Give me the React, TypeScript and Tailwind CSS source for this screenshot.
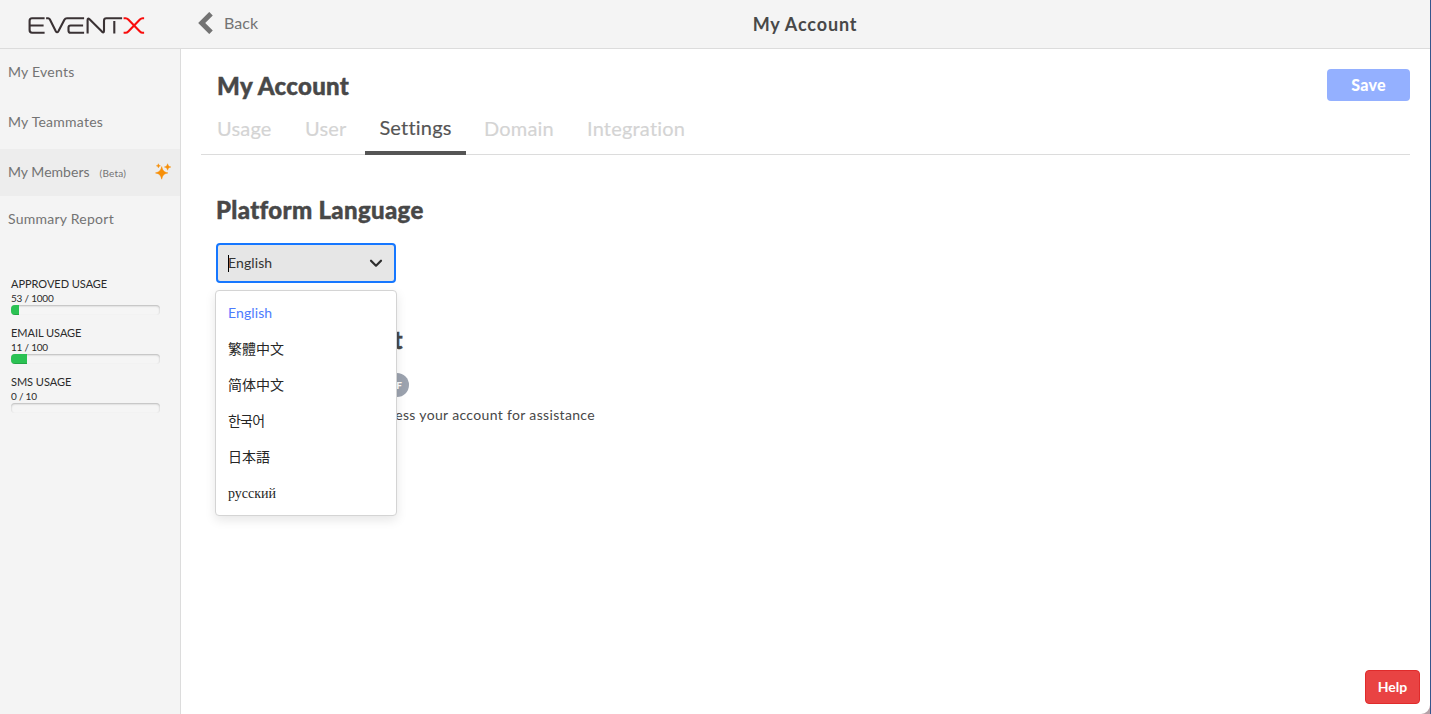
import { useState } from "react";

function Logo() {
  return (
    <svg className="ml-[28px] mt-[16px]" width="118" height="20" viewBox="28.4 16 118 20" fill="none" stroke="#3a3234" strokeWidth="2.1">
      <path d="M45 18.3H32.5Q30 18.3 30 20.8V30Q30 32.7 32.5 32.7H45M31 25.5H44" />
      <path d="M46.5 18.3H48.5Q49.6 18.3 50.2 19.3L56.2 31.2Q57.5 33.4 58.8 31.2L64.8 19.8Q65.6 18.3 67.4 18.3H84.5" />
      <path d="M84.5 32.7H71Q68.9 32.7 68.9 30.4V27.6Q68.9 25.5 71 25.5H83.5" />
      <path d="M88 33.5V20Q88 17.6 90 19.2L102.3 31.6Q104.4 33.4 104.4 30.8V20.6Q104.4 18.3 106.8 18.3H122.5M114.7 21V33.5" />
      <path d="M124 18.3H126Q127.5 18.3 128.7 19.5L140.3 31.5Q141.5 32.7 143 32.7H144.5M144.5 18.3H143Q141.5 18.3 140.3 19.5L128.7 31.5Q127.5 32.7 126 32.7H124" stroke="#f90d0d" />
    </svg>
  );
}

function Sparkles() {
  return (
    <svg width="16" height="18" viewBox="0 0 16 18" fill="#f78f08" stroke="#f78f08" strokeWidth="0.5" strokeLinejoin="round">
      <path d="M6.7 3.6C7.7 7.7 8.8 8.9 12.9 9.9C8.8 10.9 7.7 12.1 6.7 16.2C5.7 12.1 4.6 10.9 0.5 9.9C4.6 8.9 5.7 7.7 6.7 3.6Z" />
      <path d="M12.6 0.8C13.2 3 13.6 3.4 15.8 4C13.6 4.6 13.2 5 12.6 7.2C12 5 11.6 4.6 9.4 4C11.6 3.4 12 3 12.6 0.8Z" />
      <path d="M3.4 0.8C3.8 2.2 4.1 2.4 5.4 2.8C4.1 3.2 3.8 3.4 3.4 4.8C3 3.4 2.7 3.2 1.4 2.8C2.7 2.4 3 2.2 3.4 0.8Z" />
    </svg>
  );
}

const usage = [
  { label: "APPROVED USAGE", value: "53 / 1000", width: 8 },
  { label: "EMAIL USAGE", value: "11 / 100", width: 16 },
  { label: "SMS USAGE", value: "0 / 10", width: 0 },
];

const languages = [
  { name: "English", style: "text-[#4d7cfe] tracking-[0.1px]" },
  { name: "繁體中文", style: "pb-[2px] font-['Noto_Sans_CJK_TC',sans-serif]" },
  { name: "简体中文", style: "pb-[2px] font-['Noto_Sans_CJK_SC',sans-serif]" },
  { name: "한국어", style: "pb-[2px] font-['Noto_Sans_CJK_KR',sans-serif] tracking-[-0.8px]" },
  { name: "日本語", style: "pb-[2px] font-['Noto_Sans_CJK_JP',sans-serif]" },
  { name: "русский", style: "pt-[2px] font-['Liberation_Serif',serif]" },
];

const heading = "text-2xl font-black tracking-[0.33px] [-webkit-text-stroke:0.45px_#484848]";

function Sidebar() {
  const row = "flex h-[47px] items-center pb-[2px] pl-2";
  return (
    <aside className="w-[181px] shrink-0 border-r border-[#dcdcdc] bg-[#f4f4f4]">
      <nav className="text-sm tracking-[0.25px] text-[#737373]">
        <div className={row}>My Events</div>
        <div className="mt-[3px] flex h-[47px] items-center pb-[2px] pl-2">My Teammates</div>
        <div className="mt-[3px] flex h-[47px] items-center bg-[#ededed] pb-[2px] pl-2">
          <span className="tracking-[0.02px]">My Members</span>
          <span className="ml-[10px] mt-[3px] text-[10px] tracking-[0.2px]">(Beta)</span>
          <span className="ml-auto mr-[9px] pt-px"><Sparkles /></span>
        </div>
        <div className={row}>Summary Report</div>
      </nav>
      <div className="ml-[11px] mt-[33px] w-[149px] text-[11px] text-[#2b2b2b]">
        {usage.map((u) => (
          <div key={u.label} className="h-[49px]">
            <div className="leading-[15px] tracking-[-0.03px]">{u.label}</div>
            <div className="pt-px text-[10px] leading-[13px] tracking-[-0.22px]">{u.value}</div>
            <div className="h-[10px] overflow-hidden rounded-[4px] bg-[#f5f5f5] shadow-[inset_0_1px_2px_rgba(0,0,0,0.25)]">
              <div className="h-full bg-[#2bc253] shadow-[inset_0_-1px_0_rgba(0,0,0,0.15)]" style={{ width: u.width }} />
            </div>
          </div>
        ))}
      </div>
    </aside>
  );
}

function LanguageSelect() {
  const [selected, setSelected] = useState("English");
  return (
    <div className="relative mt-[17px] w-[180px]">
      <div className="flex h-10 items-center rounded-[4px] border-2 border-[#1677ff] bg-[#e6e6e6] pl-[10px] pr-[11px] text-sm text-[#333]">
        <span className="h-[17px] w-px bg-black" />
        <span className="-ml-px tracking-[0.1px]">{selected}</span>
        <svg className="ml-auto" width="14" height="10" viewBox="0 0 14 10" fill="none" stroke="#2d2d2d" strokeWidth="2.2" strokeLinecap="round" strokeLinejoin="round">
          <path d="M2 2.7L7 7.7L12 2.7" />
        </svg>
      </div>
      <ul className="absolute -left-px top-[47px] z-10 w-[182px] rounded-[4px] border border-[#d4d4d4] bg-white py-1 text-sm text-[#262626] shadow-[0_4px_11px_rgba(0,0,0,0.1)]">
        {languages.map((l) => (
          <li key={l.name} className="flex h-9 items-center pl-3" onClick={() => setSelected(l.name)}>
            <span className={l.style}>{l.name}</span>
          </li>
        ))}
      </ul>
    </div>
  );
}

export default function App() {
  return (
    <div className="relative flex h-[714px] w-[1431px] flex-col overflow-hidden border-r border-[#35558c] bg-white font-['Lato',sans-serif] text-[#484848]">
      <header className="flex h-[49px] shrink-0 border-b border-[#dcdcdc] bg-[#f4f4f4]">
        <div className="w-[180px]"><Logo /></div>
        <div className="flex w-[180px] items-center pb-[3px] pl-[18px] text-base text-[#737373]">
          <svg width="15" height="22" viewBox="0 0 15 22" fill="none" stroke="#737373" strokeWidth="5">
            <path d="M13 1.7L3.7 11L13 20.3" />
          </svg>
          <span className="ml-[11px] tracking-[0.1px]">Back</span>
        </div>
        <h1 className="flex flex-1 items-center justify-center pr-[180px] text-lg font-bold tracking-[0.85px]">My Account</h1>
      </header>
      <div className="flex flex-1">
        <Sidebar />
        <main className="min-w-0 flex-1 pl-5 pr-5 pt-5">
          <div className="flex h-[34px] justify-between pl-4">
            <h2 className={`${heading} leading-[34px]`}>My Account</h2>
            <button className="h-8 w-[83px] rounded-[4px] bg-[#94b0ff] text-base font-black tracking-[0.2px] text-white">Save</button>
          </div>
          <nav className="flex h-[52px] items-start border-b border-[#dcdcdc] text-[20px] leading-[50px] tracking-[0.2px] text-[#d4d4d4] [-webkit-text-stroke:0.15px]">
            <span className="w-[104px] pl-4">Usage</span>
            <span className="w-[60px]">User</span>
            <span className="h-[52px] w-[101px] border-b-4 border-[#555] text-center leading-[48px] text-[#555]">Settings</span>
            <span className="ml-[18px] w-[103px]">Domain</span>
            <span>Integration</span>
          </nav>
          <section className="pl-[15px] pt-[39px]">
            <h2 className={`${heading} leading-8`}>Platform Language</h2>
            <LanguageSelect />
          </section>
          <section className="pl-[15px] pt-[41px]">
            <h2 className={`${heading} w-[187px] text-right leading-8`}>Support</h2>
            <div className="ml-[153px] mt-[17px] flex h-6 w-10 items-center justify-end rounded-full bg-[#9ca3af] pr-[7px] text-[10px] font-black text-white">OFF</div>
            <p className="mt-[8px] flex w-[379px] justify-end whitespace-nowrap text-sm leading-5 tracking-[0.34px]">Allow EventX to access your account for assistance</p>
          </section>
        </main>
      </div>
      <button className="absolute bottom-[10px] right-[10px] h-[34px] w-[55px] rounded-[4px] border border-[#e02b2b] bg-[#e94343] text-sm font-bold text-white">Help</button>
      <svg className="absolute bottom-0 right-0" width="9" height="9" viewBox="0 0 9 9"><path d="M9 0A9 9 0 0 1 0 9H9Z" fill="#b5a2a8" /></svg>
    </div>
  );
}
